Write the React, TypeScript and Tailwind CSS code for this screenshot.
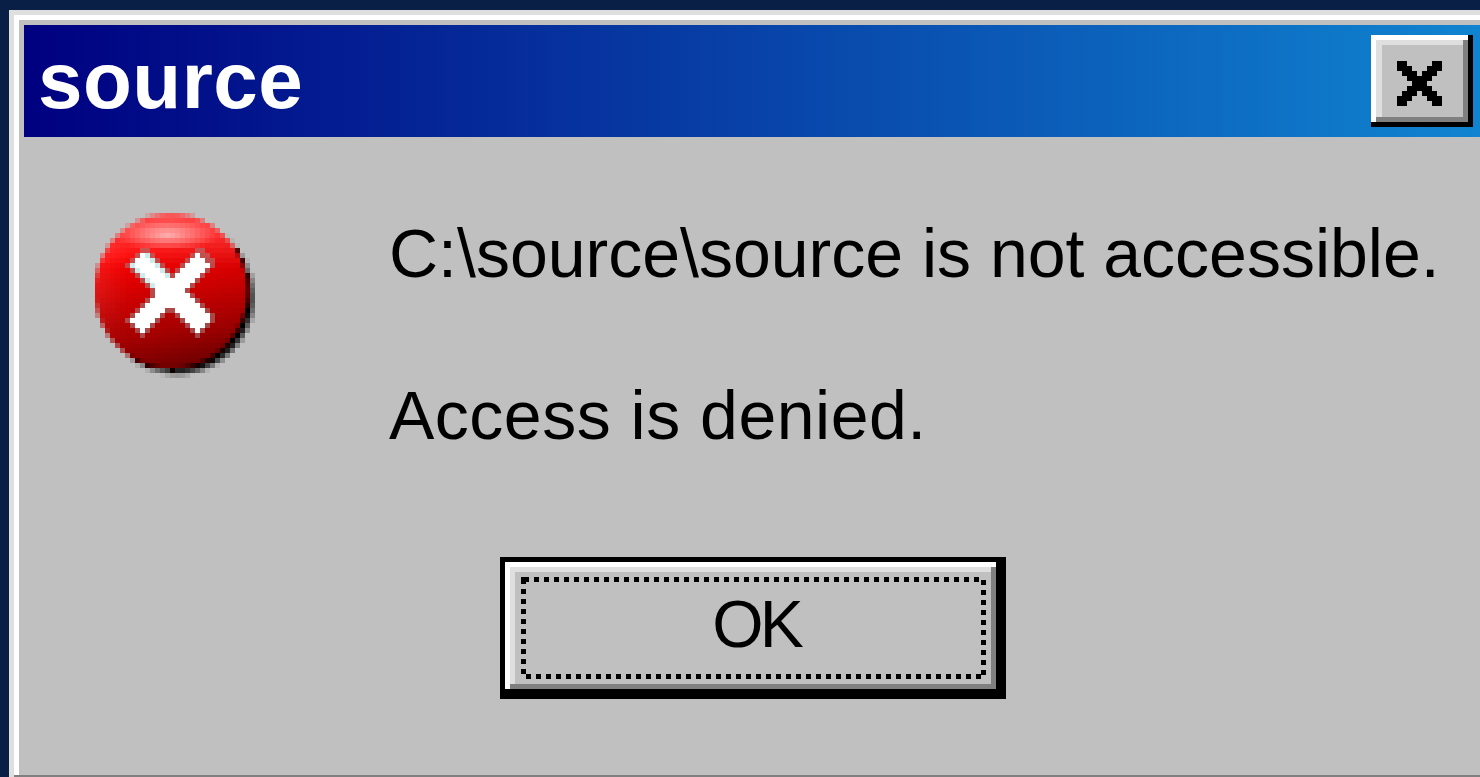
import React from 'react';

const SANS = 'font-["Liberation_Sans",Arial,sans-serif]';

// close glyph, one [start, length] pair per 5px cell run
const CLOSE_ROWS: number[][][] = [
  [[0, 2], [7, 2]],
  [[0, 3], [6, 3]],
  [[1, 3], [5, 3]],
  [[2, 5]],
  [[3, 3]],
  [[2, 5]],
  [[1, 3], [5, 3]],
  [[0, 3], [6, 3]],
  [[0, 2], [7, 2]],
];

function CloseGlyph() {
  return (
    <svg width="45" height="45" viewBox="0 0 9 9" shapeRendering="crispEdges">
      {CLOSE_ROWS.map((runs, y) =>
        runs.map(([x, w]) => <rect key={`${y}-${x}`} x={x} y={y} width={w} height={1} fill="#000" />),
      )}
    </svg>
  );
}

const clamp = (v: number, lo = 0, hi = 1) => Math.min(hi, Math.max(lo, v));
const mix = (a: number[], b: number[], t: number) => a.map((c, i) => c + (b[i] - c) * t);

// shaded red ball with a white cross, built from chunky 5px cells
function errorCell(col: number, row: number): string | null {
  const x = col * 5 + 2.5 - 76;
  const y = row * 5 + 2.5 - 78;
  const nx = x / 77;
  const ny = y / 78;
  const d = Math.hypot(nx, ny);
  const gray = [192, 192, 192];

  const sd = Math.hypot(x - 6, y - 6) / 77;
  const shadow = clamp((1.04 - sd) / 0.1);
  if (d > 1.02) {
    if (shadow <= 0) return null;
    return `rgb(${mix(gray, [0, 0, 0], shadow * clamp(0.35 + (nx + ny) * 0.55)).map(Math.round).join(',')})`;
  }

  const v = ny * 0.9 + nx * 0.18;
  let r: number;
  if (v < -0.5) r = 255;
  else if (v < 0.5) r = 205 - v * 90;
  else r = 160 - (v - 0.5) * 120;
  let gb = clamp(-ny - 0.3) * 110;
  const hx = (nx + 0.05) / 0.68;
  const hy = (ny + 0.72) / 0.2;
  gb += clamp(1 - Math.hypot(hx, hy)) * 130;
  gb += clamp(-nx - 0.55) * 50 * clamp(1 - ny);
  let color = [clamp(r, 40, 255), gb, gb];

  // cross arms
  const px = x;
  const py = y - 1;
  const a = Math.abs(px + py) / Math.SQRT2;
  const b = Math.abs(px - py) / Math.SQRT2;
  const arm = (p: number, q: number) => (p < 10.5 && q < 48 ? 2 : p < 14 && q < 52 ? 1 : 0);
  const level = Math.max(arm(a, b), arm(b, a));
  if (level === 2) {
    const edge = (10.5 - a < 3 && b > 12) || (10.5 - b < 3 && a > 12);
    color = edge && py + px < 0 ? [205, 235, 235] : [255, 255, 255];
  } else if (level === 1) {
    color = mix(color, [170, 120, 120], 0.6);
  }

  if (d > 0.96) color = mix(color, shadow > 0.3 && nx + ny > 0.3 ? [0, 0, 0] : gray, clamp((d - 0.96) / 0.07));
  return `rgb(${color.map(Math.round).join(',')})`;
}

function ErrorIcon() {
  const cells: React.ReactNode[] = [];
  for (let row = 0; row < 33; row++) {
    for (let col = 0; col < 33; col++) {
      const fill = errorCell(col, row);
      if (fill) cells.push(<rect key={`${col}-${row}`} x={col} y={row} width={1} height={1} fill={fill} />);
    }
  }
  return (
    <svg width="165" height="165" viewBox="0 0 33 33" shapeRendering="crispEdges" className="shrink-0">
      {cells}
    </svg>
  );
}

export default function App() {
  return (
    <div className="h-screen w-full overflow-hidden bg-[#0a1f45] pl-[9px] pt-[10px]">
      <div className="h-[767px] border-l-[5px] border-t-[5px] border-[#dfdfdf]">
        <div className="flex h-full flex-col">
          <div className="flex-1 border-l-[5px] border-t-[5px] border-white bg-[#c0c0c0] pl-[5px] pt-[5px]">
            {/* Title bar */}
            <div className="flex h-[112px] items-center justify-between bg-[linear-gradient(to_right,#000080,#1084d0)] pl-[14px] pr-[7px]">
              <span className={`${SANS} text-[80px] font-bold leading-none tracking-[0.5px] text-white`}>source</span>
              <button className="flex h-[92px] w-[102px] items-center justify-center bg-[#c0c0c0] pr-[5px] pt-[5px] shadow-[inset_-5px_-5px_0_#000,inset_5px_5px_0_#fff,inset_-10px_-10px_0_#808080,inset_11px_10px_0_#dfdfdf]">
                <CloseGlyph />
              </button>
            </div>

            {/* Message */}
            <div className="flex gap-[129px] pl-[71px] pt-[76px]">
              <ErrorIcon />
              <div className={`${SANS} whitespace-nowrap text-[68px] leading-[81px] text-black`}>
                <p className="mb-[81px]">C:\source\source is not accessible.</p>
                <p className="tracking-[0.5px]">Access is denied.</p>
              </div>
            </div>

            {/* Default button with its black ring and focus dots */}
            <div className="ml-[476px] mt-[101px] w-[506px] border-[5px] border-black">
              <button
                className={`${SANS} relative block h-[132px] w-full bg-[#c0c0c0] pb-[8px] pl-[6px] text-[66px] leading-none tracking-[-4px] text-black shadow-[inset_-5px_-5px_0_#000,inset_5px_5px_0_#fff,inset_-10px_-10px_0_#808080,inset_10px_10px_0_#dfdfdf]`}
              >
                OK
                <svg
                  className="absolute left-[16px] top-[15px]"
                  width="465"
                  height="102"
                  shapeRendering="crispEdges"
                >
                  <rect
                    x="2.5"
                    y="2.5"
                    width="460"
                    height="97"
                    fill="none"
                    stroke="#000"
                    strokeWidth="5"
                    strokeDasharray="5 5"
                  />
                </svg>
              </button>
            </div>
          </div>
          <div className="h-[2px] bg-[#808080]" />
        </div>
      </div>
    </div>
  );
}
